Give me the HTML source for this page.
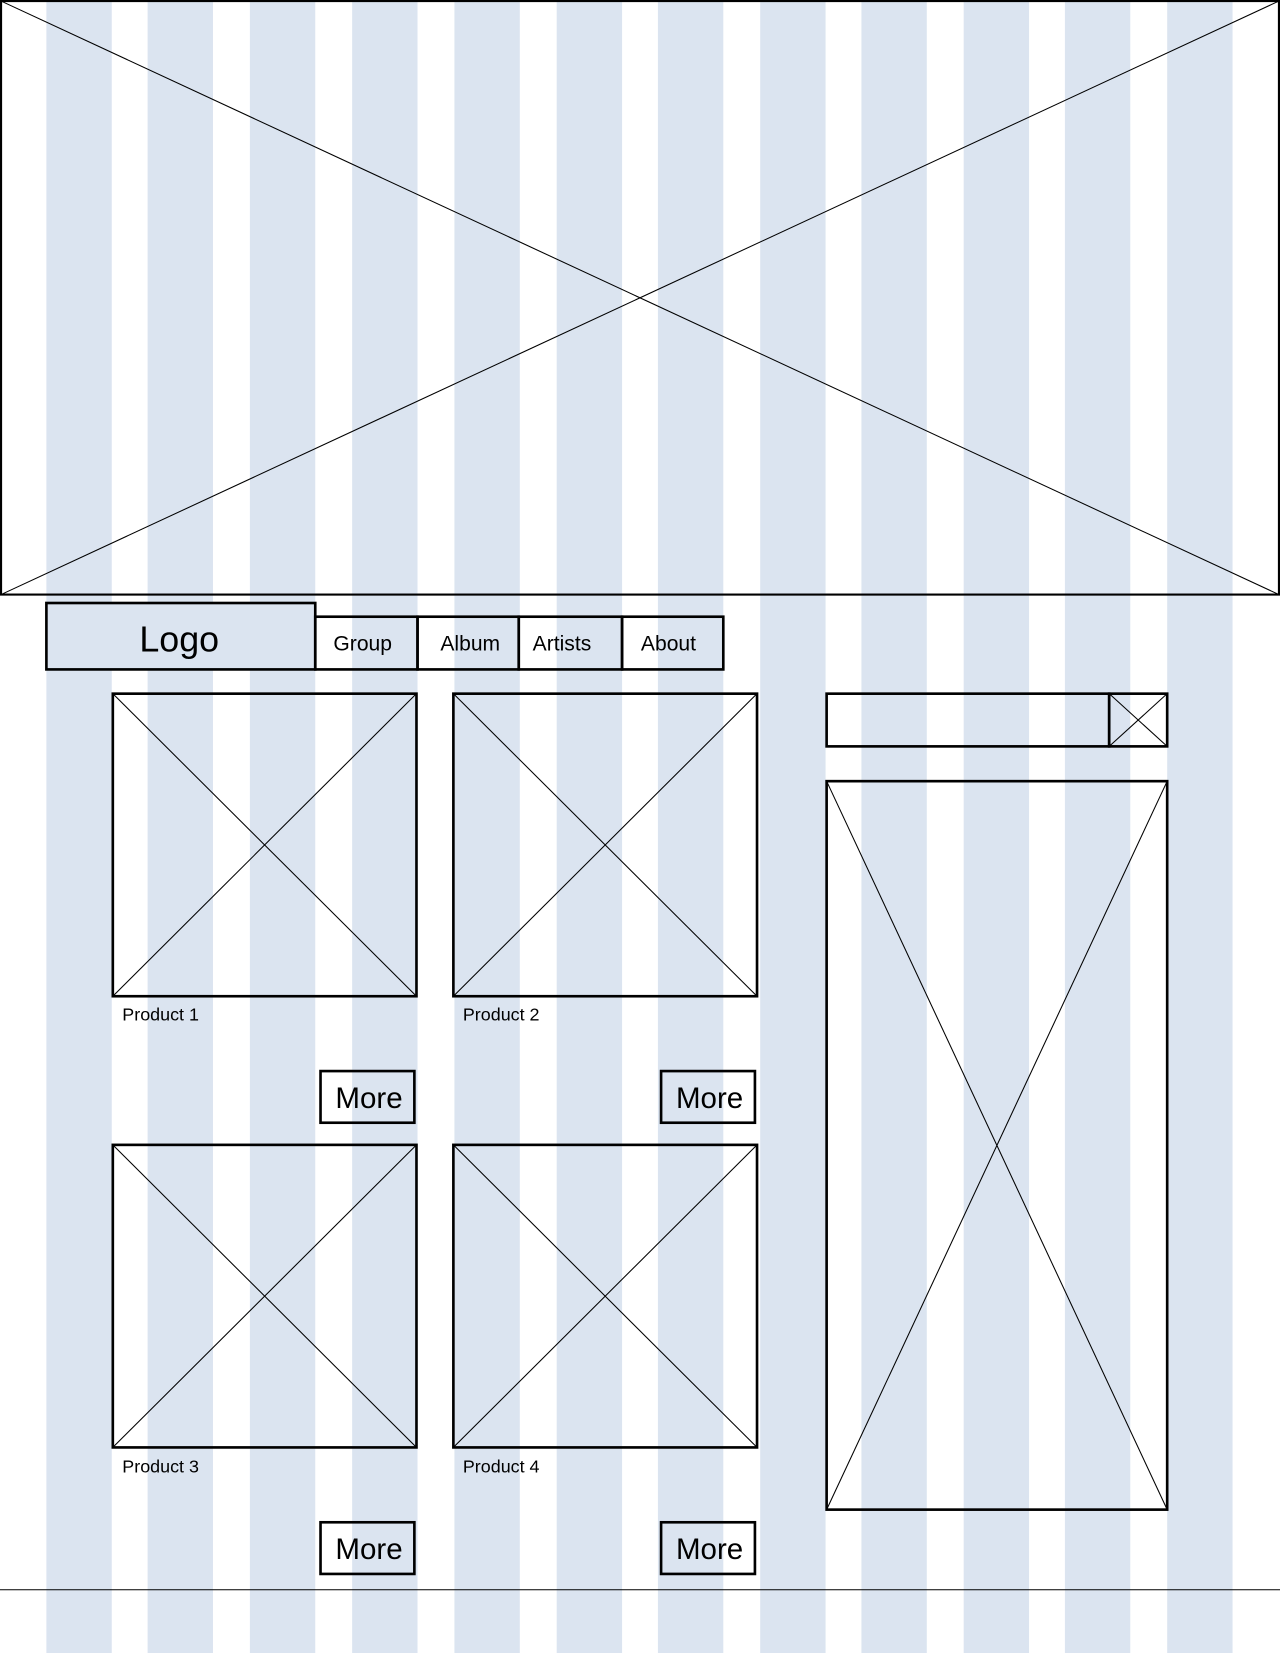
<!DOCTYPE html>
<html><head><meta charset="utf-8"><style>html,body{margin:0;padding:0;background:#fff}svg{display:block}</style></head>
<body>
<svg width="1280" height="1653" viewBox="0 0 1214 1568" preserveAspectRatio="none" xmlns="http://www.w3.org/2000/svg" font-family="Liberation Sans, sans-serif">
<rect width="1214" height="1568" fill="#fff"/>
<g fill="#dbe4f0">
<rect x="44" y="0" width="62" height="1568"/><rect x="140" y="0" width="62" height="1568"/><rect x="237" y="0" width="62" height="1568"/><rect x="334" y="0" width="62" height="1568"/><rect x="431" y="0" width="62" height="1568"/><rect x="528" y="0" width="62" height="1568"/><rect x="624" y="0" width="62" height="1568"/><rect x="721" y="0" width="62" height="1568"/><rect x="817" y="0" width="62" height="1568"/><rect x="914" y="0" width="62" height="1568"/><rect x="1010" y="0" width="62" height="1568"/><rect x="1107" y="0" width="62" height="1568"/>
</g>
<g fill="none" stroke="#000">
<rect x="1" y="1" width="1212" height="563" stroke-width="2"/>
<line x1="1" y1="1" x2="1213" y2="564" stroke-width="1"/><line x1="1213" y1="1" x2="1" y2="564" stroke-width="1"/>
<rect x="44" y="572" width="255" height="63" fill="#dbe4f0" stroke-width="2.5"/>
<rect x="299" y="585" width="97" height="50" stroke-width="2.5"/>
<rect x="396" y="585" width="96" height="50" stroke-width="2.5"/>
<rect x="492" y="585" width="98" height="50" stroke-width="2.5"/>
<rect x="590" y="585" width="96" height="50" stroke-width="2.5"/>
<g stroke-width="2.5">
<rect x="107" y="658" width="288" height="287"/><rect x="430" y="658" width="288" height="287"/>
<rect x="107" y="1086" width="288" height="287"/><rect x="430" y="1086" width="288" height="287"/>
<rect x="304" y="1016" width="89" height="49"/><rect x="627" y="1016" width="89" height="49"/>
<rect x="304" y="1444" width="89" height="49"/><rect x="627" y="1444" width="89" height="49"/>
<rect x="784" y="658" width="268" height="50"/><rect x="1052" y="658" width="55" height="50"/>
<rect x="784" y="741" width="323" height="691"/>
</g>
<g stroke-width="1">
<line x1="107" y1="658" x2="395" y2="945"/><line x1="395" y1="658" x2="107" y2="945"/>
<line x1="430" y1="658" x2="718" y2="945"/><line x1="718" y1="658" x2="430" y2="945"/>
<line x1="107" y1="1086" x2="395" y2="1373"/><line x1="395" y1="1086" x2="107" y2="1373"/>
<line x1="430" y1="1086" x2="718" y2="1373"/><line x1="718" y1="1086" x2="430" y2="1373"/>
<line x1="1052" y1="658" x2="1107" y2="708"/><line x1="1107" y1="658" x2="1052" y2="708"/>
<line x1="784" y1="741" x2="1107" y2="1432"/><line x1="1107" y1="741" x2="784" y2="1432"/>
<line x1="0" y1="1508" x2="1214" y2="1508"/>
</g>
</g>
<g fill="#000">
<text x="170" y="618" font-size="34" text-anchor="middle">Logo</text>
<text x="344" y="617" font-size="20" text-anchor="middle">Group</text>
<text x="446" y="617" font-size="20" text-anchor="middle">Album</text>
<text x="533" y="617" font-size="20" text-anchor="middle">Artists</text>
<text x="634" y="617" font-size="20" text-anchor="middle">About</text>
<text x="116" y="968" font-size="17">Product 1</text>
<text x="439" y="968" font-size="17">Product 2</text>
<text x="116" y="1397" font-size="17">Product 3</text>
<text x="439" y="1397" font-size="17">Product 4</text>
<text x="350" y="1051" font-size="28" text-anchor="middle">More</text>
<text x="673" y="1051" font-size="28" text-anchor="middle">More</text>
<text x="350" y="1479" font-size="28" text-anchor="middle">More</text>
<text x="673" y="1479" font-size="28" text-anchor="middle">More</text>
</g>
</svg>
</body></html>
